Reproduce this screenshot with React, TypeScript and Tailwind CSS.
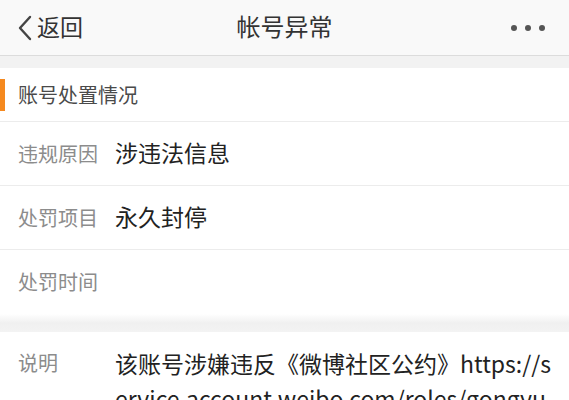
import React from 'react';

const font = { fontFamily: '"Noto Sans CJK SC", "Noto Sans", sans-serif' };

const InfoRow: React.FC<{ label: string; value?: string }> = ({ label, value }) => (
  <div className="flex items-center h-[64px] border-b border-[#ececec] pl-[18px]">
    <div className="w-[97px] shrink-0 text-[20px] text-[#8c8c8c] leading-none">{label}</div>
    {value && <div className="text-[23px] text-[#222] leading-none -mt-[3px]">{value}</div>}
  </div>
);

export default function App() {
  return (
    <div className="w-[569px] h-[400px] overflow-hidden bg-white" style={font}>
      {/* ナビゲーションバー */}
      <div className="relative flex items-center h-[56px] bg-[#f9f9f9] border-b border-[#dcdcdc]">
        <div className="flex items-center pl-[16px] text-[23px] text-[#333]">
          <svg width="18" height="28" viewBox="0 0 18 28" className="mr-[3px]">
            <path d="M14 3 L4 14 L14 25" fill="none" stroke="#444" strokeWidth="2.4" strokeLinecap="round" strokeLinejoin="round" />
          </svg>
          <span className="-mt-[2px]">返回</span>
        </div>
        <div className="absolute left-0 right-0 text-center text-[24px] text-[#333] pointer-events-none -mt-[4px]">帐号异常</div>
        <div className="ml-auto flex items-center gap-[8px] pr-[24px]">
          <span className="w-[6px] h-[6px] rounded-full bg-[#555]" />
          <span className="w-[6px] h-[6px] rounded-full bg-[#555]" />
          <span className="w-[6px] h-[6px] rounded-full bg-[#555]" />
        </div>
      </div>
      <div className="h-[12px] bg-[#f2f2f2]" />

      {/* 処置情況 */}
      <div className="flex items-center h-[54px] border-b border-[#ececec]">
        <div className="w-[5px] h-[32px] bg-[#f5891f]" />
        <div className="pl-[13px] text-[20px] text-[#4a4a4a] leading-none">账号处置情况</div>
      </div>
      <InfoRow label="违规原因" value="涉违法信息" />
      <InfoRow label="处罚项目" value="永久封停" />
      <div className="flex items-center h-[64px] pl-[18px]">
        <div className="text-[20px] text-[#8c8c8c] leading-none">处罚时间</div>
      </div>
      <div className="h-[18px] bg-gradient-to-b from-white via-[#f0f0f0] to-[#f3f3f3]" />

      {/* 説明 */}
      <div className="flex pl-[18px] pr-[12px] pt-[14px]">
        <div className="w-[97px] shrink-0 text-[20px] text-[#8c8c8c] leading-[34px]">说明</div>
        <div className="text-[23px] text-[#222] leading-[35px] break-all">
          该账号涉嫌违反《微博社区公约》https://service.account.weibo.com/roles/gongyue
        </div>
      </div>
    </div>
  );
}
